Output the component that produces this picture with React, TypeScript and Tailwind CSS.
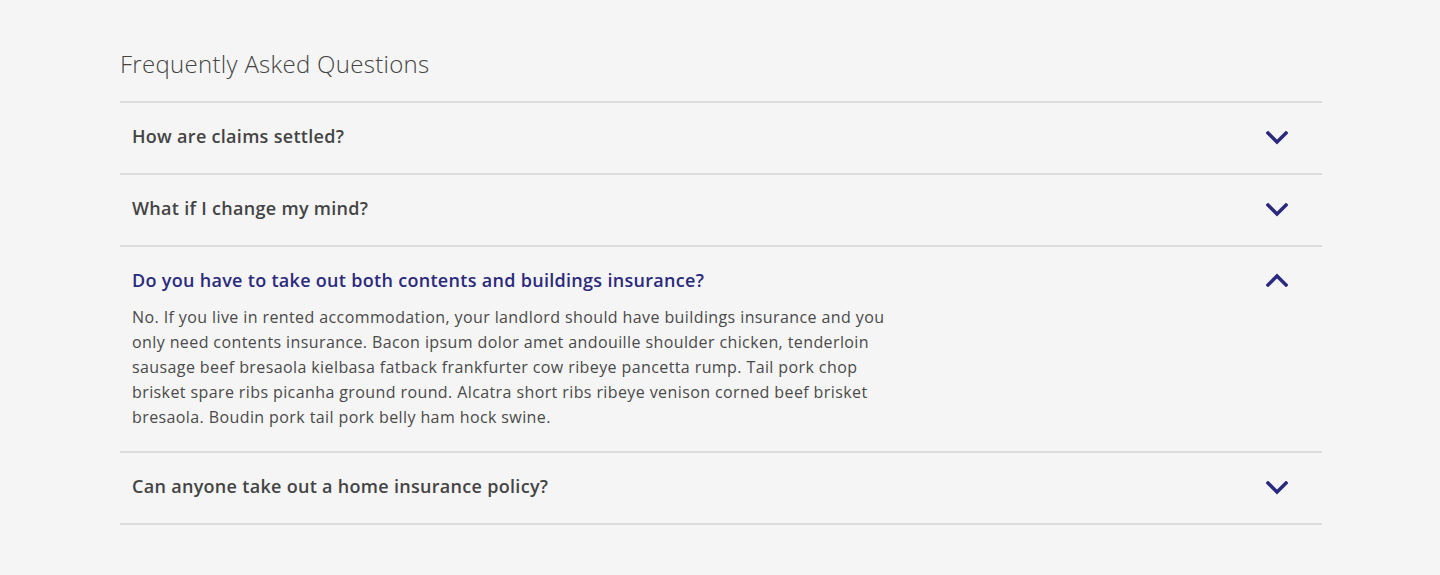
import { useState } from 'react';

const faqs = [
  {
    question: 'How are claims settled?',
    answer: '',
  },
  {
    question: 'What if I change my mind?',
    answer: '',
  },
  {
    question: 'Do you have to take out both contents and buildings insurance?',
    answer:
      'No. If you live in rented accommodation, your landlord should have buildings insurance and you only need contents insurance. Bacon ipsum dolor amet andouille shoulder chicken, tenderloin sausage beef bresaola kielbasa fatback frankfurter cow ribeye pancetta rump. Tail pork chop brisket spare ribs picanha ground round. Alcatra short ribs ribeye venison corned beef brisket bresaola. Boudin pork tail pork belly ham hock swine.',
  },
  {
    question: 'Can anyone take out a home insurance policy?',
    answer: '',
  },
];

const Chevron = ({ up }: { up: boolean }) => (
  <svg
    viewBox="0 0 22 14"
    className={`w-[22px] h-[14px] flex-shrink-0 ${up ? '' : 'mt-[3px]'}`}
    fill="none"
  >
    {up ? (
      <polyline points="2,12 11,3 20,12" stroke="#2b2a7c" strokeWidth="3.4" strokeLinecap="square" />
    ) : (
      <polyline points="2,2 11,11 20,2" stroke="#2b2a7c" strokeWidth="3.4" strokeLinecap="square" />
    )}
  </svg>
);

const App = () => {
  const [open, setOpen] = useState<number | null>(2);

  return (
    <div className="min-h-screen bg-[#f5f5f5] font-['Open_Sans',sans-serif]">
      <div className="max-w-[1202px] ml-[120px] pt-[48px]">
        <h2 className="text-[24px] leading-8 font-light tracking-[0.3px] text-[#444] mb-[21px]">
          Frequently Asked Questions
        </h2>

        <div className="border-b-2 border-[#dcdcdc]">
          {faqs.map((faq, index) => {
            const isOpen = open === index;
            return (
              <div key={index} className="border-t-2 border-[#dcdcdc]">
                <button
                  onClick={() => setOpen(isOpen ? null : index)}
                  className={`w-full flex items-center justify-between pl-3 pr-[34px] pt-[21px] text-left ${
                    isOpen ? 'pb-0' : 'pb-[25px]'
                  }`}
                >
                  <span
                    className={`text-[18px] leading-6 font-semibold tracking-[0.3px] ${
                      isOpen ? 'text-[#2b2a7c]' : 'text-[#444]'
                    }`}
                  >
                    {faq.question}
                  </span>
                  <Chevron up={isOpen} />
                </button>
                {isOpen && (
                  <p className="pl-3 mt-[13px] pb-[21px] max-w-[780px] text-[16px] leading-[25px] tracking-[0.4px] text-[#4a4a4a]">
                    {faq.answer}
                  </p>
                )}
              </div>
            );
          })}
        </div>
      </div>
    </div>
  );
};

export default App;
